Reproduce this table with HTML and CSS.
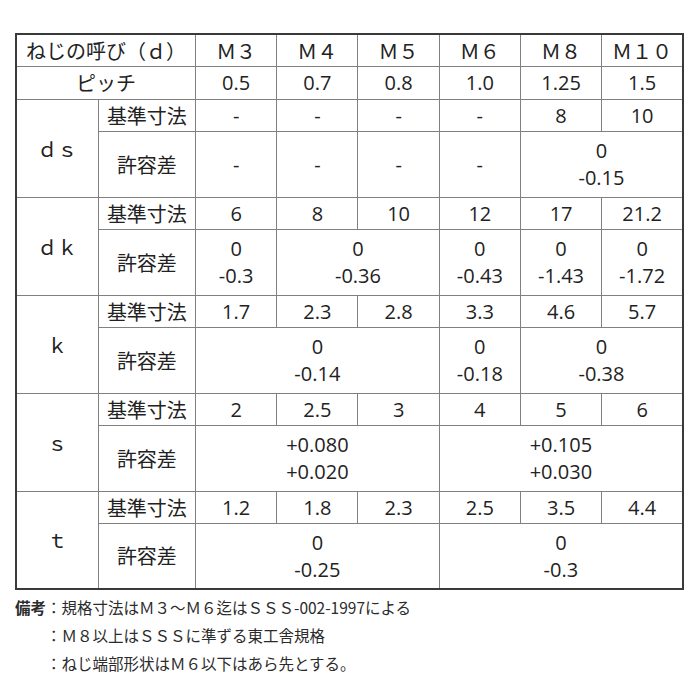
FILE: index.html
```html
<!DOCTYPE html>
<html lang="ja">
<head>
<meta charset="utf-8">
<link rel="stylesheet" href="styles.css">
</head>
<body>
<div class="page">
<table class="spec">
<colgroup>
<col class="c-a"><col class="c-b"><col class="c-n"><col class="c-n"><col class="c-n"><col class="c-n"><col class="c-n"><col class="c-n">
</colgroup>
<tr class="r-head">
<td colspan="2" class="jp">ねじの呼び（ｄ）</td>
<td class="jp">Ｍ３</td><td class="jp">Ｍ４</td><td class="jp">Ｍ５</td><td class="jp">Ｍ６</td><td class="jp">Ｍ８</td><td class="jp">Ｍ１０</td>
</tr>
<tr class="r-pitch">
<td colspan="2" class="jp">ピッチ</td>
<td>0.5</td><td>0.7</td><td>0.8</td><td>1.0</td><td>1.25</td><td>1.5</td>
</tr>
<tr class="r-base">
<td rowspan="2" class="jp">ｄｓ</td><td class="jp">基準寸法</td>
<td>-</td><td>-</td><td>-</td><td>-</td><td>8</td><td>10</td>
</tr>
<tr class="r-tol">
<td class="jp">許容差</td>
<td>-</td><td>-</td><td>-</td><td>-</td><td colspan="2">0<br>-0.15</td>
</tr>
<tr class="r-base">
<td rowspan="2" class="jp">ｄｋ</td><td class="jp">基準寸法</td>
<td>6</td><td>8</td><td>10</td><td>12</td><td>17</td><td>21.2</td>
</tr>
<tr class="r-tol">
<td class="jp">許容差</td>
<td>0<br>-0.3</td><td colspan="2">0<br>-0.36</td><td>0<br>-0.43</td><td>0<br>-1.43</td><td>0<br>-1.72</td>
</tr>
<tr class="r-base">
<td rowspan="2" class="jp">ｋ</td><td class="jp">基準寸法</td>
<td>1.7</td><td>2.3</td><td>2.8</td><td>3.3</td><td>4.6</td><td>5.7</td>
</tr>
<tr class="r-tol">
<td class="jp">許容差</td>
<td colspan="3">0<br>-0.14</td><td>0<br>-0.18</td><td colspan="2">0<br>-0.38</td>
</tr>
<tr class="r-base">
<td rowspan="2" class="jp">ｓ</td><td class="jp">基準寸法</td>
<td>2</td><td>2.5</td><td>3</td><td>4</td><td>5</td><td>6</td>
</tr>
<tr class="r-tol">
<td class="jp">許容差</td>
<td colspan="3">+0.080<br>+0.020</td><td colspan="3">+0.105<br>+0.030</td>
</tr>
<tr class="r-base">
<td rowspan="2" class="jp">ｔ</td><td class="jp">基準寸法</td>
<td>1.2</td><td>1.8</td><td>2.3</td><td>2.5</td><td>3.5</td><td>4.4</td>
</tr>
<tr class="r-tol">
<td class="jp">許容差</td>
<td colspan="3">0<br>-0.25</td><td colspan="3">0<br>-0.3</td>
</tr>
</table>
<div class="notes">
<div class="notes-label">備考</div>
<div class="notes-lines">
<div>：規格寸法はＭ３～Ｍ６迄はＳＳＳ-002-1997による</div>
<div>：Ｍ８以上はＳＳＳに準ずる東工舎規格</div>
<div>：ねじ端部形状はＭ６以下はあら先とする。</div>
</div>
</div>
</div>
</body>
</html>
```

FILE: styles.css
```css
html, body {
  margin: 0;
  padding: 0;
  background: #ffffff;
}
.page {
  padding: 33px 0 0 15px;
  color: #222222;
  font-family: "Open Sans", "Noto Sans CJK JP", sans-serif;
}
.spec {
  border-collapse: collapse;
  table-layout: fixed;
  width: 669px;
  border: 2px solid #3a3a3a;
}
.c-a { width: 82px; }
.c-b { width: 97px; }
.c-n { width: 81px; }
.spec td {
  border: 1px solid #808080;
  padding: 0;
  text-align: center;
  vertical-align: middle;
  font-size: 20px;
  line-height: 27px;
}
.spec td.jp {
  font-family: "Noto Sans CJK JP", sans-serif;
  font-size: 20px;
}
.r-head { height: 32px; }
.r-pitch { height: 33px; }
.r-base { height: 32px; }
.r-tol { height: 66px; }
.notes {
  display: flex;
  margin-top: 3px;
  font-family: "Noto Sans CJK JP", sans-serif;
  font-size: 15.5px;
  line-height: 28px;
  color: #2b2b2b;
}
.notes-label {
  font-weight: bold;
}
.notes-lines {
  display: flex;
  flex-direction: column;
}
```
